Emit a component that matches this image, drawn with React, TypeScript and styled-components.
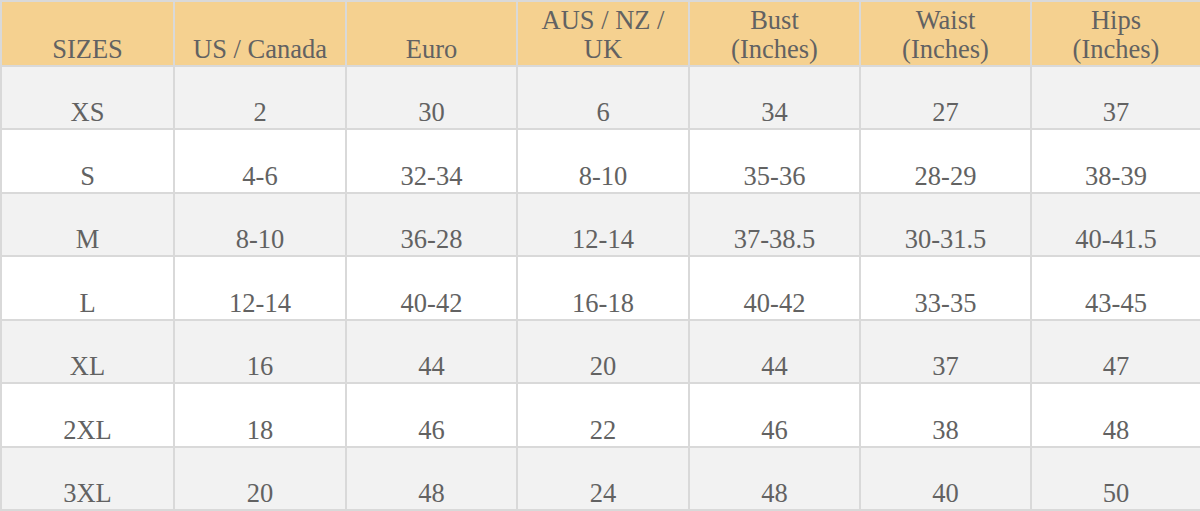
import { Fragment } from 'react';
import styled, { createGlobalStyle } from 'styled-components';

const GlobalStyle = createGlobalStyle`
  html, body {
    margin: 0;
    padding: 0;
    background: #ffffff;
  }
`;

const Chart = styled.div`
  width: 1200px;
  height: 511px;
  box-sizing: border-box;
  display: grid;
  grid-template-columns: 173px 172px 171px 172px 171px 171px 170px;
  grid-template-rows: 65px repeat(7, 1fr);
  border-top: 2px solid #d9d9d9;
  border-left: 2px solid #d9d9d9;
  font-family: 'Liberation Serif', 'Times New Roman', serif;
  font-size: 26.5px;
  line-height: 29px;
  color: #626262;
`;

const Cell = styled.div<{ $head?: boolean; $shade?: boolean }>`
  display: flex;
  align-items: flex-end;
  justify-content: center;
  text-align: center;
  box-sizing: border-box;
  padding-bottom: 1px;
  border-right: 2px solid #d9d9d9;
  border-bottom: 2px solid #d9d9d9;
  background: ${(p) => (p.$head ? '#f5d190' : p.$shade ? '#f2f2f2' : '#ffffff')};
`;

const headers = [
  ['SIZES'],
  ['US / Canada'],
  ['Euro'],
  ['AUS / NZ /', 'UK'],
  ['Bust', '(Inches)'],
  ['Waist', '(Inches)'],
  ['Hips', '(Inches)'],
];

const rows = [
  ['XS', '2', '30', '6', '34', '27', '37'],
  ['S', '4-6', '32-34', '8-10', '35-36', '28-29', '38-39'],
  ['M', '8-10', '36-28', '12-14', '37-38.5', '30-31.5', '40-41.5'],
  ['L', '12-14', '40-42', '16-18', '40-42', '33-35', '43-45'],
  ['XL', '16', '44', '20', '44', '37', '47'],
  ['2XL', '18', '46', '22', '46', '38', '48'],
  ['3XL', '20', '48', '24', '48', '40', '50'],
];

export default function App() {
  return (
    <>
      <GlobalStyle />
      <Chart>
        {headers.map((lines, i) => (
          <Cell key={'h' + i} $head>
            <span>
              {lines.map((l, j) => (
                <Fragment key={j}>
                  {j > 0 && <br />}
                  {l}
                </Fragment>
              ))}
            </span>
          </Cell>
        ))}
        {rows.map((row, r) =>
          row.map((v, c) => (
            <Cell key={r + '-' + c} $shade={r % 2 === 0}>
              {v}
            </Cell>
          ))
        )}
      </Chart>
    </>
  );
}
